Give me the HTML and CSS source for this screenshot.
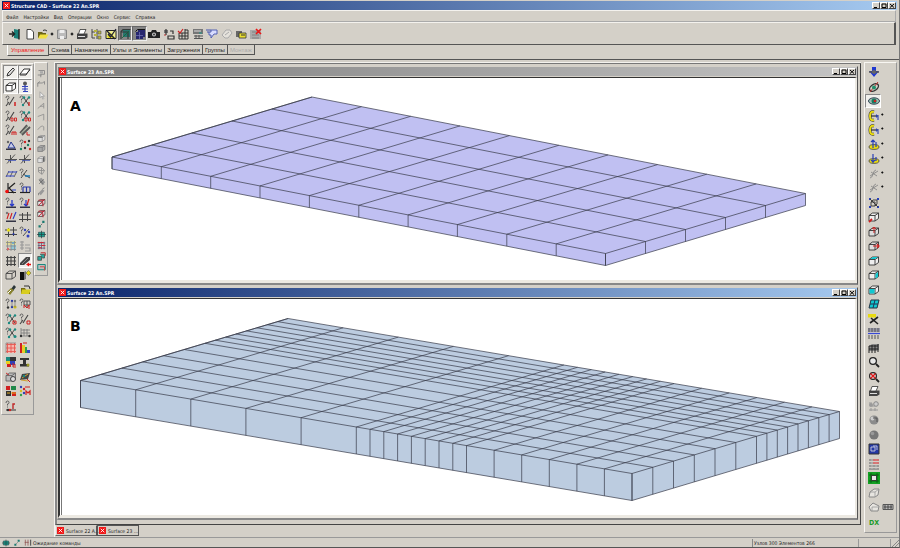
FILE: index.html
```html
<!DOCTYPE html>
<html lang="ru">
<head>
<meta charset="utf-8">
<title>Structure CAD - Surface 22 An.SPR</title>
<link rel="stylesheet" href="styles.css">
</head>
<body>
<div class="app">
  <header class="titlebar titlebar-active">
    <svg class="logo" viewBox="0 0 8 8"><path fill="#f01818" d="M0 0h8v8H0z"/><path stroke="#fff" d="M2 2l4 4M6 2L2 6"/></svg>
    <h1 class="title">Structure CAD - Surface 22 An.SPR</h1>
    <div class="winbtns"></div>
  </header>
  <nav class="menubar">
    <button>Файл</button><button>Настройки</button><button>Вид</button><button>Операции</button><button>Окно</button><button>Сервис</button><button>Справка</button>
  </nav>
  <div class="toolbar">
    <div class="tools tools-file" data-icons="exit doc open tiny save tiny"></div>
    <div class="tools tools-main" data-icons="print tree check viewA viewB camera swap table calc chat pages cards stop"></div>
  </div>
  <div class="tabs">
    <button class="tab tab-on">Управление</button><button class="tab">Схема</button><button class="tab">Назначения</button><button class="tab">Узлы и Элементы</button><button class="tab">Загружения</button><button class="tab">Группы</button><button class="tab" disabled>Монтаж</button>
  </div>
  <main class="workspace">
    <aside class="panel panel-two" data-icons="pencil eraser cube person qbar qcross qbar0 qcross0 qbarm beams tri qdots axes axes para qstar kframe frame sup supred load hash hashy qperc gridc list grid arrow wire boxy brush folder qpair qred qx qslash qteal gridg gridr hist mix ibeam cubeo plate blocks dotsm qr"></aside>
    <aside class="panel panel-one" data-icons="gbox gcurve gptr gang gleg garc gcube gsolid gside gtwist gmesh gpen redgrid redgrid diag hex redbl cubes tealbox"></aside>
    <section class="desk">
      <div class="mdi">
        <article class="window">
          <header class="titlebar titlebar-idle">
            <svg class="logo" viewBox="0 0 8 8"><path fill="#f01818" d="M0 0h8v8H0z"/><path stroke="#fff" d="M2 2l4 4M6 2L2 6"/></svg>
            <h2 class="title">Surface 23 An.SPR</h2><div class="winbtns"></div>
          </header>
          <div class="view"><svg id="plate-a" class="plate plate-a" viewBox="62 78 793 202"><text x="70" y="111">A</text></svg></div>
        </article>
        <article class="window">
          <header class="titlebar titlebar-active">
            <svg class="logo" viewBox="0 0 8 8"><path fill="#f01818" d="M0 0h8v8H0z"/><path stroke="#fff" d="M2 2l4 4M6 2L2 6"/></svg>
            <h2 class="title">Surface 22 An.SPR</h2><div class="winbtns"></div>
          </header>
          <div class="view"><svg id="plate-b" class="plate plate-b" viewBox="62 299 793 216"><text x="70" y="331">B</text></svg></div>
        </article>
      </div>
      <div class="docs">
        <button class="doc"><svg class="logo" viewBox="0 0 8 8"><path fill="#f01818" d="M0 0h8v8H0z"/><path stroke="#fff" d="M2 2l4 4M6 2L2 6"/></svg>Surface 22 A...</button>
        <button class="doc doc-on"><svg class="logo" viewBox="0 0 8 8"><path fill="#f01818" d="M0 0h8v8H0z"/><path stroke="#fff" d="M2 2l4 4M6 2L2 6"/></svg>Surface 23 ...</button>
      </div>
    </section>
    <aside class="panel panel-right" data-icons="down rot eye yz+ yz+ ya+ yb+ xf+ xf+ fit c1 c2 c3 ctop cright cfront cfill cut split wall zoom zoomx print gears sphere ball pic sheet green iso iso2 dx"></aside>
  </main>
  <footer class="status">
    <div class="status-icons" data-icons="hex diag hash2"></div>
    <p class="status-text">Ожидание команды</p>
    <p class="status-count">Узлов 300 Элементов 266</p>
    <span class="status-end"></span>
    <svg class="grip" viewBox="0 0 8 8"><path stroke="#888" d="M1 8l7-7M4 8l4-4"/></svg>
  </footer>
</div>
<script src="app.js"></script>
</body>
</html>
```
FILE: styles.css
```css
* { box-sizing: border-box; }
body { margin: 0; background: #d4d0c8; color: #222; font: 5px/8px "DejaVu Sans Condensed", "DejaVu Sans", Tahoma, sans-serif; }
button { font: inherit; color: inherit; background: none; border: 0; padding: 0; margin: 0; }
h1, h2, p { margin: 0; font-size: inherit; }
svg { display: block; }
.app { min-height: 100vh; display: flex; flex-direction: column; border-bottom: 1px solid #555; border-right: 1px solid #777; }

.titlebar { display: flex; align-items: center; gap: 1px; height: 9px; color: #fff; padding: 0 1px; }
.titlebar-active { background: linear-gradient(90deg, #0a246a, #a6caf0); }
.titlebar-idle { background: linear-gradient(90deg, #7c7c7c, #c4c4c4); }
.app > .titlebar { margin: 1px 2px 0; }
.logo { width: 7px; height: 7px; flex: none; }
.title { flex: 1; font-weight: bold; white-space: nowrap; }
.winbtns { display: flex; }
.winbtns button { width: 8px; height: 7px; background: #d4d0c8; border: 1px solid; border-color: #fff #444 #444 #fff; color: #000; }
.winbtns svg { width: 6px; height: 5px; }

.menubar { display: flex; gap: 5px; height: 12px; margin: 0 3px 0 2px; padding: 1px 3px 0; border: 1px solid; border-color: #f4f2ee #aaa #aaa #f4f2ee; }
.toolbar { display: flex; align-items: center; height: 23px; margin: 0 3px 0 2px; border: solid; border-width: 1px 2px 1px 1px; border-color: #f4f2ee #555 #555 #f4f2ee; padding-left: 4px; }
.tools { display: grid; }
.tools button { display: grid; place-items: center; height: 15px; }
.tools-file { grid-template-columns: 16px 14px 12px 6px 14px 5px; }
.tools-main { grid-template-columns: repeat(7, 15px 14px); }
.tools svg, .panel svg { width: 12px; height: 12px; overflow: visible; }
.tools .small svg { width: 4px; height: 4px; }
.tools .dark { background: #858585; border: 1px solid; border-color: #666 #eee #eee #666; }

.tabs { display: flex; align-items: flex-start; height: 15px; padding-left: 7px; border-bottom: 1px solid #555; font: 6px/8px "Liberation Sans", Arial, sans-serif; }
.tab { height: 10px; padding: 0 2px; border: solid; border-width: 0 1px 1px 0; border-color: #555; white-space: nowrap; }
.tab-on { height: 11px; color: #f02020; padding: 0 4px 0 3px; border-left: 1px solid #fff; }
.tab:disabled { color: #aaa; }

.workspace { flex: 1; display: grid; grid-template-columns: auto auto 1fr auto; align-items: start; padding: 2px 2px 0 1px; }
.panel { border: 1px solid; border-color: #f8f6f2 #999 #999 #f8f6f2; display: grid; }
.panel button { display: flex; align-items: center; justify-content: center; }
.panel-two { grid-template-columns: 15px 14px; grid-template-rows: repeat(12, 14px 15px); padding: 1px; margin-top: 1px; }
.panel .lit { background: #f0efec; border: 1px solid; border-color: #888 #fff #fff #888; }
.panel-one { grid-template-columns: 12px; grid-auto-rows: 11px 11px 10px 11px; padding: 5px 0 3px; }
.panel.panel-one svg { width: 9px; height: 9px; }
.panel-right { grid-template-columns: 31px; grid-template-rows: repeat(16, 14px 15px); padding: 2px 0 3px; margin-left: 3px; }
.panel-right button { justify-content: flex-start; padding-left: 3px; }
.panel-right .lit { width: 16px; padding-left: 2px; }

.desk { margin-left: 6px; border-left: 1px solid #f4f2ee; border-top: 1px solid #f4f2ee; }
.mdi { border: solid; border-width: 1px 1px 1px 2px; border-color: #777 #444 #444 #888; padding: 2px 2px 4px 0; display: grid; gap: 2px; }
.window { border: solid; border-width: 1px 1px 2px; border-color: #d4d0c8 #555 #888 #d4d0c8; }
.view { background: #fff; border-top: 1px solid #333; border-left: 2px solid #333; border-right: 2px solid #ece9e2; border-bottom: 3px solid #ece9e2; padding-left: 1px; margin-top: 1px; }
.plate { width: 100%; height: auto; border-left: 1px solid #777; }
.plate text { font: bold 14px "DejaVu Sans", Verdana, sans-serif; fill: #000; }
.plate path { stroke: #363a48; stroke-width: .7; stroke-linejoin: round; }
.plate-a path { fill: #c0c0f2; }
.plate-b path { fill: #bccce0; }

.docs { display: flex; height: 12px; }
.doc { display: flex; align-items: center; gap: 2px; height: 11px; width: 42px; padding-left: 1px; white-space: nowrap; border: 1px solid; border-color: transparent #555 #666 #eee; }
.doc-on { border-color: #555; }

.status { display: flex; align-items: center; height: 10px; border-top: 1px solid #999; }
.status-icons { display: grid; grid-template-columns: repeat(3, 11px); width: 33px; }
.status-icons button { display: grid; place-items: center; }
.status-icons svg { width: 8px; height: 8px; }
.status-text { flex: 1; }
.status-count { width: 106px; border-left: 1px solid #888; padding-left: 1px; }
.status-end { width: 33px; height: 8px; border: 1px solid #999; border-width: 0 1px; }
.grip { width: 8px; height: 8px; }
```
FILE: app.js
```js
const p = (d, c = '#333', w = 1) => `<path fill="none" stroke="${c}" stroke-width="${w}" d="${d}"/>`;
const f = (d, c = '#333') => `<path fill="${c}" d="${d}"/>`;
const dot = (x, y, c, r = 1.2) => `<circle cx="${x}" cy="${y}" r="${r}" fill="${c}"/>`;
const q = p('M1 3Q1 1 2.5 1Q4 1 4 2.5Q4 4 2.5 4V5.5M2.5 6.5v1', '#555', .9);
const bar = p('M4 10L9 2M1 11L4 7', '#444', 1.1);
const cross = p('M5 3l5 7M10 2L4 10', '#444') + dot(5, 2.5, '#1a8a80') + dot(10, 2.5, '#1a8a80') + dot(4, 10, '#1a8a80');
const zero = p('M6 8h2v3H6zM9.5 8h2v3h-2z', '#d02020', .9);
const box = (c = '#333', fill = 'none') => `<path fill="${fill}" stroke="${c}" stroke-width=".9" d="M1 4.5h6v5.500H1zM1 4.5l3.500-2.500h6v5.500L7 10M7 4.500l3.500-2.500"/>`;
const mesh = (c, w = .9) => p('M1 2.5h10M1 6h10M1 9.5h10M2.5 1v10M6 1v10M9.5 1v10', c, w);
const base = p('M1 10.5h10', '#222', 1.2);
const ground = f('M1 9.5h10v1.5H1z', '#334');
const star = p('M0 6.500h12M2 10.500l8-9M5.500 2v8', '#444', .9) + p('M3 7.500h8', '#4455bb', .8);
const hashS = p('M0 4h12M0 8.5h12M3.5 2v9M8.5 1v9', '#444');
const lens = p('M8 8l3 3', '#222', 1.8) + '<circle cx="5" cy="5" r="3.4" fill="#e8e8e8" stroke="#222" stroke-width="1.2"/>';
const more = f('M13 4.500l1.300-1.300 1.300 1.300-1.300 1.300z', '#111');
const figX = p('M2 10Q4 10 5 6T8 2M3 4l6 4M10 3L2 8', '#888', .9);

const icons = {
  exit: f('M5 1l5 1v9l-5-1z', '#197f78') + p('M10 1v10.5', '#222', 1.4) + p('M0 6h5M3 3.5L5.5 6 3 8.5', '#222', 1.4),
  doc: '<path fill="#fff" stroke="#333" stroke-width=".9" d="M3 1.5h4l2.5 2.500V11H3z"/>',
  open: f('M1 4h4l1 1h3v5H1z', '#6b6418') + f('M3 6.500h8.500L9 10.500H1z', '#f0e040') + p('M6 2.500q2-1.500 4 .500', '#333'),
  save: '<path fill="#bbb" stroke="#888" d="M1.500 2h9v8.500h-9z"/>' + f('M3.500 2h5v3h-5zM4 8h4v3H4z', '#eee'),
  tiny: f('M1 6l5-5 5 5-5 5z', '#222'),
  print: f('M1 5.500h10.500v4L9 11H1z', '#444') + '<path fill="#fff" stroke="#333" stroke-width=".8" d="M4 1.500h6L8 6H2.500z"/>' + p('M2 8.500h7', '#ddd'),
  tree: p('M2 1v9h3M2 4h3M7 1v10', '#444') + f('M4 2h3v2H4zM4 6h3v2H4zM8 3h3v3H8zM8 8h3v3H8z', '#b8b43a') + p('M8 3h3v3H8zM8 8h3v3H8z', '#555', .6),
  check: '<path fill="#f0ee90" stroke="#222" d="M1 2.500h10v8H1z"/>' + f('M2 8l4-3 4 5H3z', '#e0d820') + p('M2 3l8 8M3 6l2.500 3L11 1', '#223', 1.300),
  viewA: f('M4 2h7v7H4z', '#26756e') + p('M2 11V3.500l2-2h7.500M2 4h7v7', '#353b3b', 1.200) + p('M3 10l7-7', '#163', .8),
  viewB: f('M2 4h7v7H2zM4 2h7v7H9V4H4z', '#28286e') + p('M2 7.500h7M5.500 4v7', '#7777bb', .7) + p('M1.500 3.500l2-2h7.500', '#111'),
  camera: f('M0 4h3l1-2h4l1 2h3v6H0z', '#222') + dot(6, 6.500, '#ccc', 2) + dot(6, 6.500, '#333', 1),
  swap: f('M1 2h4v3H1z', '#777') + p('M3 1v6M7 3h3v3M5 8h6v3H5z', '#333', 1.200) + p('M1 7h2', '#b33'),
  table: p('M2 5h9v6H2zM2 8h9M5 5v6M8 1v10M8 2h3v3', '#333') + p('M1 3l2 2 3-4', '#d02020', 1.200),
  calc: f('M1 1h10v5H1z', '#777') + p('M2 8h9M2 10.500h9M4 7v4M7 7v4', '#555') + p('M2 3h7', '#ddd') + f('M7 4h3v2H7z', '#4a8580'),
  chat: '<path fill="#d8dcff" stroke="#4555ae" stroke-width=".9" d="M5 2h6v4H8L5 10V7H3V4h2z"/>' + p('M0 2h5M1 4h2', '#4555ae'),
  pages: '<path fill="#e4e1db" stroke="#aaa" d="M1 7l4-5h4l2 3-4 5H4z"/>' + p('M4 7l4-3', '#aaa'),
  cards: f('M1 3h6v6H1z', '#666') + '<path fill="#eadf30" stroke="#333" stroke-width=".8" d="M4 5h7v5H4z"/>' + p('M6 7h4', '#333'),
  stop: f('M0 2h11v9H0z', '#aaa') + p('M2 4h7M2 7h7M2 10h7', '#777', .8) + p('M6 1l5 5M11 1L6 6', '#e81818', 1.700),

  pencil: '<path fill="#ddd" stroke="#333" d="M2 10l1-3 5-5 1.500 1.500L5 9z"/>',
  eraser: '<path fill="#fff" stroke="#333" d="M1 8l4-5h6L7 9H1z"/>' + p('M1.500 8H7l4-4', '#333', .8),
  cube: box('#222', '#fff'),
  person: dot(6, 2.500, '#555', 2) + p('M3 5.500h6M3 8h6M4 10.500h5M6 4v6', '#3344bb', 1.200),
  qbar: q + bar + p('M10 7v4', '#d02020', 1.500), qcross: q + cross + p('M10 7v4', '#d02020', 1.300),
  qbar0: q + bar + zero, qcross0: q + cross + zero,
  qbarm: q + bar + p('M7 11V8h4v3M9 8v3', '#d02020'),
  beams: p('M1 9L8 1M3 11l8-8', '#555', 1.800) + p('M2 10l7-8', '#7d917d') + p('M8 8v3h3', '#d02020'),
  tri: '<path fill="#c8cbe8" stroke="#23348e" d="M3 9l3-6 4 6z"/>' + ground + dot(3, 3, '#666'),
  qdots: q + dot(6, 3, '#d02020') + dot(10, 2, '#333') + dot(9, 6, '#188060') + dot(6, 9, '#333') + dot(11, 10, '#d02020') + dot(2, 10, '#188060'),
  axes: star,
  para: p('M1 9l3-6M5 9l3-6M9 9l3-6', '#555', .9) + p('M3 4h9M1 8h8', '#3344cc', 1.200),
  qstar: q + p('M2 10l6-8M4 6l7 4', '#444') + p('M6 8h5', '#1878b8', 1.500),
  kframe: p('M3 1v9M10 1L4 6l5 5M1 10.500h10', '#222', 1.200) + dot(2, 9.500, '#f01010', 1.800) + p('M7 8h4', '#3344cc'),
  frame: q + p('M4 5h7v5M4 5v5M7.500 5v5', '#2838a8', 1.200) + base,
  sup: q + p('M7 3v6M5 7l2 2 2-2', '#2838c8', 1.300) + ground,
  supred: q + p('M7 3v6M5 7l2 2 2-2', '#2838c8', 1.200) + p('M10 2L8 8', '#d02020', 1.300) + ground,
  load: p('M4 2L2 8M7 2L5 8', '#d02020', 1.100) + p('M11 1L8 8', '#2838c8', 1.100) + ground + dot(2, 2, '#777'),
  hash: hashS,
  hashy: hashS + dot(3.500, 4, '#e8e020', 1.700) + dot(8.500, 8, '#2838a8', 1),
  qperc: q + p('M10 3L4 10', '#555') + dot(6, 4, '#3344bb') + dot(10, 6, '#3344bb') + dot(9, 10, '#3344bb', 1.500),
  gridc: f('M1 1h10v4H1z', '#e0dc9c') + f('M6 5h5v5H6z', '#92c8d8') + mesh('#888', .8) + dot(3, 9, '#d66') + dot(8, 3, '#70a8c8'),
  list: p('M1 2h4M1 5h4M1 8h4M3 1v9M6 5h5M6 8h5v3H6', '#999', 1.200),
  grid: mesh('#444', 1.100),
  arrow: f('M1 8l6-6h4v3L5 10H1z', '#444') + p('M3 9l6-6', '#999', .8) + f('M7 9.500l3-2v1.300h2v1.500h-2v1.300z', '#e81010'),
  wire: box('#444'),
  boxy: f('M1 3h4v8H1z', '#111') + f('M5 3l2-1v8l-2 1z', '#777') + '<path fill="#e8dc10" stroke="#554" stroke-width=".5" d="M7 4l2.500-2.500L12 4 9.500 6.500z"/>',
  brush: f('M6 5l3-4 2 2-3 4z', '#2a3538') + f('M2 8l4-4 3 2-4 5z', '#87812e') + p('M3 9l3-3', '#fff'),
  folder: f('M2 4h4l1 2h4v4H2z', '#746b10') + f('M3 5.500h9L10 10H2z', '#d8cd20') + p('M5 2h5l1 3', '#333'),
  qpair: q + dot(7, 3, '#2838a8') + dot(10, 3, '#777') + dot(3, 9.500, '#333') + dot(7, 9, '#2838a8') + dot(10, 9, '#c8b820', 1.600) + p('M7 3v6M10 3v6', '#777', .7),
  qred: q + p('M5 3h6v4H5zM8 3v7', '#555') + p('M5 10V7l3 3 2-3v4', '#d02020'),
  qx: q + cross + p('M8 8h3v3H8z', '#d02020'),
  qslash: q + bar + p('M8 8h3v3H8z', '#d02020'),
  qteal: q + cross + dot(10, 9.500, '#1a8a80', 1.500),
  gridg: p('M2 1v9M1 9h10M5 2v7M8 2v7M2 3h9M2 6h9', '#777', .8) + dot(2, 9, '#333') + dot(10.500, 9, '#333'),
  gridr: f('M1 1h10v10H1z', '#f4b8b0') + mesh('#e85850') + p('M1 1v10M1 1h10', '#888', .8),
  hist: f('M1 1h2v10H1z', '#d02020') + f('M3 3h3v8H3z', '#e8cb28') + f('M6 5h2v6H6z', '#30a048') + f('M8 8h3v3H8z', '#3048c8') + p('M4 1h4', '#d02020'),
  mix: f('M1 1h4v4H1z', '#1a8a80') + f('M5 1h6v4H5z', '#333') + f('M1 5h4v3H1z', '#e8d020') + f('M5 5h5v4H5z', '#3040b8') + f('M2 8h4v3H2z', '#d02020') + p('M8 7v4h3M8 9h3', '#d02020'),
  ibeam: f('M1 2h9v2H7v4h3v2.500H1V8h3V4H1z', '#333') + dot(9, 9, '#9c9a28', 1.500),
  cubeo: box('#666', '#bbb') + '<circle cx="8" cy="8" r="2.500" fill="#ddd" stroke="#444"/>' + p('M1 2l3 2', '#c33'),
  plate: f('M3 3l8-1-2 6-8 1z', '#444') + p('M3 7l6-4M2 9l7 1', '#d0a030') + dot(5, 5, '#1a8a80') + p('M8 8l3 3', '#d02020'),
  blocks: f('M1 1h4v4H1zM7 7h4v4H7z', '#d02020') + f('M6 1h5v4H6z', '#208848') + f('M1 6h5v5H1z', '#333') + p('M6 8h5M2 8h3', '#e8b020'),
  dotsm: dot(2, 2, '#3040b8') + dot(2, 6, '#d8bd20') + dot(2, 10, '#30a048') + dot(5, 4, '#d02020') + dot(5, 8, '#3040b8') + p('M6 2h5M7 10V6l2 2 2-2v4', '#d02020', 1.200),
  qr: q + p('M1 10h10', '#333') + p('M8 9V4h2', '#c02828', 1.400) + dot(3, 10, '#333') + dot(5, 10, '#d02020'),

  gbox: p('M2 2h8v5H5v4M1 8h5', '#888', 1.200) + f('M4 3h4v3H4z', '#aaa'),
  gcurve: p('M1 9V4h6l3-2v4M1 4l3-2', '#888', 1.200), gptr: '<path fill="#eee" stroke="#999" d="M4 1v8l2-2 2 4 1-1-2-3h3z"/>',
  gang: p('M1 10l8-7v7M4 7h5', '#888'), gleg: p('M1 6l8-3v8', '#888'), garc: p('M1 9q5-7 8-4v5', '#888'),
  gcube: box('#888', '#ddd') + p('M1.500 4h6', '#777', 2), gsolid: box('#777', '#aaa'), gside: box('#888', '#e0e0e0') + p('M9 3v6', '#666', 2),
  gtwist: p('M2 2h4l4 4-3 5-5-3zM6 2v9M2 6h8', '#888'), gmesh: f('M2 3l4-2 5 6-4 4z', '#999') + p('M3 9l6-6M3 4l6 6', '#666'),
  gpen: f('M2 8l5-5 3 2-5 6z', '#999') + p('M7 3l3-2M2 8v3', '#777'),
  redgrid: box('#333', '#eee') + p('M2 3h7M2 10l8-8M8 6v5', '#c02838', 1.400),
  diag: f('M7 1h3v3H7zM2 7h3v3H2z', '#1a7a70') + p('M5 7l2-2', '#555'),
  hex: '<path fill="#16a090" stroke="#355" d="M2 3h8v6H2z"/>' + p('M6 1v10M0 6h12', '#244'),
  redbl: mesh('#557', 1) + p('M1 2h8M6 6h5M2 9h4', '#d02838', 1.500),
  cubes: '<path fill="#2aa59a" stroke="#444" d="M1 6h5v5H1zM4 3h6v5H7"/>' + p('M5 1h6v4', '#c03030', 1.300),
  tealbox: '<path fill="#bbb" stroke="#16867c" stroke-width="1.300" d="M1 2h10v7H1z"/>' + p('M4 5h6v5', '#d04040', 1.200),

  down: f('M4 1h4v4h3L6 11 1 5h3z', '#2038d0') + p('M1 6h10', '#555', 1.500) + dot(6, 6, '#666', 2),
  rot: '<ellipse cx="6" cy="6.500" rx="5" ry="3" transform="rotate(-35 6 6.500)" fill="none" stroke="#333" stroke-width="1.400"/>' + p('M2 11l8-10', '#c03030') + dot(6, 6.500, '#20906c', 2),
  eye: '<ellipse cx="6" cy="6" rx="5.500" ry="3.200" fill="#9abcb0" stroke="#345"/>' + dot(6, 6, '#137b60', 2.500) + dot(7, 6, '#d02020', 1.300),
  yz: p('M6 2Q2 1 2 6t4 4', '#333', 3) + p('M6 2Q2 1 2 6t4 4', '#e8da10', 2) + p('M3 6h7', '#222', 1.100) + p('M8.500 4.500v3M10 5v5', '#2840b8', 1.100),
  ya: '<ellipse cx="6" cy="8" rx="5" ry="2.400" fill="#e8da10" stroke="#444" stroke-width=".8"/>' + p('M5 1v8M3 3l2-2 2 2M8 3v5', '#2840b8', 1.200),
  yb: '<ellipse cx="6" cy="8" rx="5" ry="2.400" fill="#e8da10" stroke="#444" stroke-width=".8"/>' + p('M5 1v9M3 7l2 2 2-2M8 4v4', '#2840b8', 1.200),
  xf: figX,
  fit: f('M1 1h2v2H1zM9 1h2v2H9zM1 9h2v2H1zM9 9h2v2H9z', '#2840b8') + p('M3 5h4v4H3zM3 5l2-2h4v4L7 9M2 2l8 8', '#333', .9),
  c1: box('#333', '#eee') + p('M1 11l3-3', '#d02020', 1.800), c2: box('#333', '#ddd') + p('M6 1v6M4 3l2-2 2 2', '#d02020'),
  c3: box('#333', '#ddd') + p('M5 6h6M9 4l2 2-2 2', '#d02020', 1.200),
  ctop: box('#333', '#eee') + f('M2 4l3-2h5L7 4z', '#10c8d0'), cright: box('#333', '#eee') + f('M7.500 5l2.500-2v5L7.500 9.500z', '#10c8d0'),
  cfront: box('#333', '#eee') + f('M1.500 5h5v4.500h-5z', '#10c8d0'),
  cfill: '<path fill="#10c8d0" stroke="#234" d="M1 10l2-8h8L9 10z"/>' + p('M2 6h8M5 10l2-8', '#235'),
  cut: f('M0 1h8v3.500H0z', '#e8da10') + p('M2 10l8-6M3 5l7 6', '#222', 1.600),
  split: f('M0 1h12v4H0z', '#99a') + p('M1 1v4M4 1v4M7 1v4M10 1v4M1 8v4M4 8v4M7 8v4M10 8v4', '#555') + p('M0 6.500h12', '#3848d8', 1.200),
  wall: f('M1 4l3-2h7v6l-3 1H1z', '#888') + p('M1 4h9M1 7h9M1 11V4M4 11V3M7 11V3M10 10V2', '#222'),
  zoom: lens, zoomx: lens + p('M2.500 2.500l5 5M7.500 2.500l-5 5', '#e01818', 1.400),
  gears: p('M1 3h3M4 6h3M1 10h9M3 8v3M7 8v3', '#999') + '<circle cx="8" cy="4" r="2.300" fill="#ccc" stroke="#888"/>' + dot(3, 5, '#999', 2),
  sphere: dot(6, 6, '#8b8b8b', 4.600) + dot(4.500, 4.500, '#ccc', 2) + p('M5 4h4v4', '#555'), ball: dot(6, 6, '#777', 4.600) + dot(4.500, 4.500, '#999', 1.800),
  pic: '<path fill="#2438a4" stroke="#333" d="M1 1h10v10H1z"/>' + p('M3 4h4v4H3zM5 3h4v4', '#ccd', .9),
  sheet: p('M1 2h10M1 5h10M1 8h10M1 11h10', '#888', 1.300) + p('M4 1v10M8 1v10', '#ccc', .7) + p('M5 2h6M5 5h6', '#e86868', 1.300),
  green: f('M0 0h12v12H0z', '#12a022') + p('M1 3h10M3 1v10M9 1v10M1 9h10', '#054d0b', .7) + '<path fill="#e8e8e8" stroke="#222" stroke-width=".8" d="M3.500 3.500h5v5h-5z"/>',
  iso: '<path fill="#e7e5e0" stroke="#888" d="M1 10l1-5 4-3h5L10 8l-3 2z"/>' + p('M2 5h5l4-3M7 5v5', '#999', .8),
  iso2: '<path fill="#e7e5e0" stroke="#888" d="M1 6l4-4 6 3-1 5H3z"/>' + p('M4 10V6h6', '#999', .8) + '<path fill="#bbb" stroke="#555" d="M15 3.500h10v5H15z"/>' + p('M17 4v4M20 4v4M23 4v4M16 6h8', '#333', .8),
  dx: '<text x="1" y="9" font-size="7" font-weight="bold" fill="#1c9b28">DX</text>',
  hash2: p('M2 1v9M6 1v9M1 5h6', '#844') + p('M10 1v9', '#333', 1.300)
};
const states = { tiny: 'small', viewA: 'dark', viewB: 'dark', pencil: 'lit', eraser: 'lit', cube: 'lit', person: 'lit', arrow: 'lit', eye: 'lit' };

document.querySelectorAll('[data-icons]').forEach(host => {
  host.innerHTML = host.dataset.icons.split(' ').map(key => {
    const name = key.replace('+', '');
    return `<button class="${states[name] || ''}" aria-label="${name}"><svg viewBox="0 0 12 12">${icons[name]}${key.endsWith('+') ? more : ''}</svg></button>`;
  }).join('');
});
document.querySelectorAll('.winbtns').forEach(host => {
  const shapes = { minimize: 'M1 4.500h3', maximize: 'M1 1h4v3.500H1z', close: 'M1 1l4 3.500M5 1L1 4.500' };
  host.innerHTML = Object.entries(shapes).map(([name, d]) =>
    `<button aria-label="${name}"><svg viewBox="0 0 6 5">${p(d, '#000')}</svg></button>`).join('');
});

// Draws a slab: corner is the left point, u runs along the front edge, v to the back.
function slab(id, corner, u, v, depth, us, vs) {
  const at = (s, t, z = 0) => `${(corner[0] + u[0] * s + v[0] * t).toFixed(1)} ${(corner[1] + u[1] * s + v[1] * t + z).toFixed(1)}`;
  let lines = `M${at(0, 0)}L${at(0, 1)}L${at(1, 1)}L${at(1, 1, depth)}L${at(1, 0, depth)}L${at(0, 0, depth)}Z`;
  us.forEach(s => { lines += `M${at(s, 1)}L${at(s, 0)}L${at(s, 0, depth)}`; });
  vs.forEach(t => { lines += `M${at(0, t)}L${at(1, t)}L${at(1, t, depth)}`; });
  const el = document.createElementNS('http://www.w3.org/2000/svg', 'path');
  const [outline, ...rest] = lines.split('Z');
  el.setAttribute('d', outline + 'Z');
  const inner = el.cloneNode();
  inner.setAttribute('d', rest.join(''));
  inner.style.fill = 'none';
  document.getElementById(id).append(el, inner);
}
const tenths = n => Array.from({ length: n }, (_, i) => i / n);
slab('plate-a', [112, 157], [493.500, 96.500], [200, -60], 12, tenths(10).concat(1), tenths(5));
slab('plate-b', [80.500, 380.500], [551.500, 93], [207.500, -62], 27,
  [0, .1, .2, .3, .4, .5, .525, .55, .575, .6, .625, .65, .675, .7, .75, .8, .85, .9, .95, 1],
  [0, .1, .2, .3, .4, .5, .6, .65, .7, .75, .8, .85, .9, .95]);
```
